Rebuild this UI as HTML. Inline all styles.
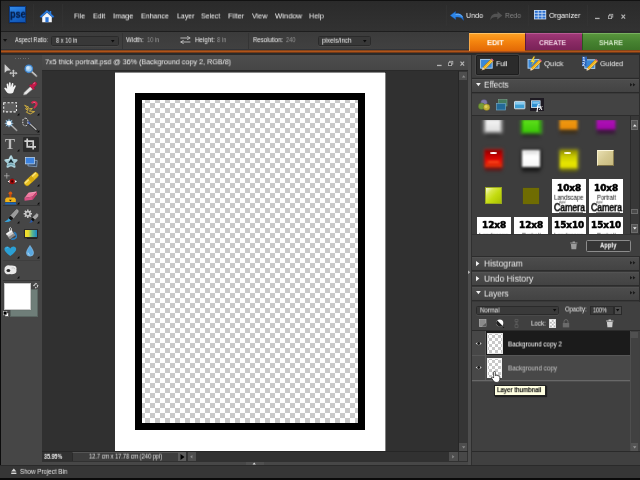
<!DOCTYPE html>
<html><head><meta charset="utf-8"><title>Photoshop Elements</title>
<style>
html,body{margin:0;padding:0;background:#000;}
body{width:640px;height:480px;overflow:hidden;position:relative;font-family:"Liberation Sans",sans-serif;}
#app{position:absolute;left:0;top:0;width:640px;height:480px;overflow:hidden;background:#444;}
#app div,#app svg,#app span{position:absolute;box-sizing:border-box;}
#app svg{overflow:visible;}
.t{white-space:nowrap;transform-origin:0 50%;will-change:transform;}


</style></head><body><div id="app">
<div style="left:0px;top:0px;width:640px;height:30.5px;background:linear-gradient(#2a2a2a,#323232);"></div>
<div style="left:0px;top:0px;width:640px;height:1.3px;background:#121212;"></div>
<div style="left:0px;top:30.5px;width:468.5px;height:19.5px;background:linear-gradient(#3b3b3b,#414141);border-top:1px solid #1e1e1e;"></div>
<div style="left:0px;top:49px;width:468.5px;height:1px;background:#30343a;"></div>
<div style="left:0px;top:49.9px;width:640px;height:3.4px;background:linear-gradient(#5a3018,#b85a1c 35%,#aa5018 60%,#4a2a18);"></div>
<div style="left:0px;top:53.3px;width:640px;height:1.3px;background:#2a2a2a;"></div>
<div style="left:0px;top:54.6px;width:41.5px;height:410.4px;background:#464646;"></div>
<div style="left:0px;top:0px;width:1.2px;height:480px;background:#0c0c0c;"></div>
<div style="left:41.5px;top:54.6px;width:426.5px;height:15.4px;background:linear-gradient(#4d4d4d,#464646);"></div>
<div style="left:41.5px;top:70px;width:426.5px;height:1px;background:#2a2a2a;"></div>
<div style="left:41.5px;top:71px;width:416.5px;height:380px;background:#303030;"></div>
<div style="left:115px;top:72px;width:270px;height:1px;background:#8a8a8a;"></div>
<div style="left:385px;top:73px;width:1px;height:378px;background:#808080;"></div>
<div style="left:115px;top:73px;width:270px;height:378px;background:#fff;"></div>
<div style="left:141px;top:99px;width:218px;height:325px;background-color:#fff;background-image:conic-gradient(#c9c9c9 25%,#fff 0 50%,#c9c9c9 0 75%,#fff 0);background-size:10px 10px;background-position:-1px -1px;filter:blur(.5px);"></div>
<div style="left:135px;top:93.1px;width:230px;height:6.9px;background:#000;"></div>
<div style="left:135px;top:423.2px;width:230px;height:6.9px;background:#000;"></div>
<div style="left:135px;top:93.1px;width:6.8px;height:337.0px;background:#000;"></div>
<div style="left:358.2px;top:93.1px;width:6.8px;height:337.0px;background:#000;"></div>
<div style="left:458px;top:71px;width:10px;height:380.3px;background:#353535;border-left:1px solid #262626;"></div>
<div style="left:459.3px;top:72.3px;width:7.9px;height:8.2px;background:#4e4e4e;"></div>
<svg style="left:461.6px;top:75.2px;" width="3.4" height="2.6" viewBox="0 0 3.4 2.6"><path d="M0 2.4 L1.7 0.2 L3.4 2.4Z" fill="#8a8a8a"/></svg>
<div style="left:459.3px;top:442.5px;width:7.9px;height:8.5px;background:#4e4e4e;"></div>
<svg style="left:461.6px;top:445.6px;" width="3.4" height="2.6" viewBox="0 0 3.4 2.6"><path d="M0 0.2 L1.7 2.4 L3.4 0.2Z" fill="#8a8a8a"/></svg>
<div style="left:41.5px;top:451px;width:426.5px;height:11px;background:#313131;border-top:1px solid #262626;"></div>
<div style="left:41.5px;top:462px;width:426.5px;height:3px;background:#474747;"></div>
<div style="left:72px;top:452px;width:106.2px;height:9.2px;background:#3d3d3d;border-top:1px solid #555;border-left:1px solid #2a2a2a;"></div>
<div style="left:178.2px;top:452px;width:8.0px;height:9.2px;background:#5c5c5c;"></div>
<svg style="left:180px;top:453.5px;" width="5" height="6.0" viewBox="0 0 5 6.0"><path d="M0.5 0 L4.5 3 L0.5 6Z" fill="#000"/></svg>
<div style="left:187.5px;top:452.3px;width:8.5px;height:8.7px;background:#4e4e4e;"></div>
<svg style="left:190.4px;top:455px;" width="2.6" height="3.4" viewBox="0 0 2.6 3.4"><path d="M2.4 0 L0.2 1.7 L2.4 3.4Z" fill="#8a8a8a"/></svg>
<div style="left:449px;top:452.3px;width:9px;height:8.7px;background:#4e4e4e;"></div>
<svg style="left:452.4px;top:455px;" width="2.6" height="3.4" viewBox="0 0 2.6 3.4"><path d="M0.2 0 L2.4 1.7 L0.2 3.4Z" fill="#8a8a8a"/></svg>
<div style="left:458.5px;top:452.3px;width:8.5px;height:8.7px;background:#484848;"></div>
<div style="left:468px;top:54.6px;width:3px;height:410.4px;background:#4d4d4d;"></div>
<div style="left:471px;top:54.6px;width:1px;height:410.4px;background:#2f2f2f;"></div>
<div style="left:472px;top:54.6px;width:168px;height:410.9px;background:#3d3d3d;"></div>
<div style="left:0px;top:465.3px;width:640px;height:12.7px;background:#363636;border-top:1px solid #2a2a2a;"></div>
<div style="left:0px;top:478px;width:640px;height:2px;background:#0a0a0a;"></div>
<div style="left:8.6px;top:6px;width:17.8px;height:17.2px;background:linear-gradient(160deg,#348ae6,#1a6cd2 50%,#0e52b0);border:1px solid #0c3a80;border-bottom-color:#082a66;box-shadow:0 0 1px #1a1a1a;"></div>
<span id="t0" class="t" style="left:9.6px;top:7px;font-size:10.8px;line-height:12.96px;color:#061c44;font-weight:bold;transform:translateY(0.74px) scaleX(0.849);-webkit-text-stroke:0.3px #061c44;">pse</span>
<div style="left:33px;top:4px;width:1px;height:23px;background:#1c1c1c;border-right:0.5px solid #363636;opacity:.5;"></div>
<div style="left:62px;top:4px;width:1px;height:23px;background:#1c1c1c;border-right:0.5px solid #363636;opacity:.5;"></div>
<svg style="left:38.5px;top:8.5px;" width="16.0" height="14.0" viewBox="0 0 16.0 14.0">
<path d="M8 1 L0.8 7.6 L2.2 8.8 L8 3.4 L13.8 8.8 L15.2 7.6 Z" fill="#2d7fe0" stroke="#164a9a" stroke-width="0.5"/>
<path d="M3.2 8 L8 3.8 L12.8 8 V13.2 H3.2Z" fill="#f4f6fa"/>
<rect x="6.4" y="8.2" width="3.2" height="5" fill="#2a74d8"/>
<rect x="10.6" y="2" width="1.6" height="3" fill="#2d7fe0"/>
</svg>
<span id="t1" class="t" style="left:73.6px;top:11px;font-size:7.8px;line-height:9.36px;color:#f6f6f6;font-weight:normal;transform:translateY(0.38px) scaleX(0.8825);">File</span>
<span id="t2" class="t" style="left:92.8px;top:11px;font-size:7.8px;line-height:9.36px;color:#f6f6f6;font-weight:normal;transform:translateY(0.38px) scaleX(0.9005);">Edit</span>
<span id="t3" class="t" style="left:112.5px;top:11px;font-size:7.8px;line-height:9.36px;color:#f6f6f6;font-weight:normal;transform:translateY(0.38px) scaleX(0.9413);">Image</span>
<span id="t4" class="t" style="left:141px;top:11px;font-size:7.8px;line-height:9.36px;color:#f6f6f6;font-weight:normal;transform:translateY(0.38px) scaleX(0.9031);">Enhance</span>
<span id="t5" class="t" style="left:176.6px;top:11px;font-size:7.8px;line-height:9.36px;color:#f6f6f6;font-weight:normal;transform:translateY(0.38px) scaleX(0.8916);">Layer</span>
<span id="t6" class="t" style="left:201.4px;top:11px;font-size:7.8px;line-height:9.36px;color:#f6f6f6;font-weight:normal;transform:translateY(0.38px) scaleX(0.8859);">Select</span>
<span id="t7" class="t" style="left:228.3px;top:11px;font-size:7.8px;line-height:9.36px;color:#f6f6f6;font-weight:normal;transform:translateY(0.38px) scaleX(0.9234);">Filter</span>
<span id="t8" class="t" style="left:251.9px;top:11px;font-size:7.8px;line-height:9.36px;color:#f6f6f6;font-weight:normal;transform:translateY(0.38px) scaleX(0.9126);">View</span>
<span id="t9" class="t" style="left:274.9px;top:11px;font-size:7.8px;line-height:9.36px;color:#f6f6f6;font-weight:normal;transform:translateY(0.38px) scaleX(0.9771);">Window</span>
<span id="t10" class="t" style="left:309.3px;top:11px;font-size:7.8px;line-height:9.36px;color:#f6f6f6;font-weight:normal;transform:translateY(0.38px) scaleX(0.9223);">Help</span>
<span id="t11" class="t" style="left:466.2px;top:10px;font-size:7.8px;line-height:9.36px;color:#f6f6f6;font-weight:normal;transform:translateY(0.88px) scaleX(0.9174);">Undo</span>
<span id="t12" class="t" style="left:505px;top:10px;font-size:7.8px;line-height:9.36px;color:#868686;font-weight:normal;transform:translateY(0.88px) scaleX(0.8583);">Redo</span>
<span id="t13" class="t" style="left:548.6px;top:10px;font-size:7.8px;line-height:9.36px;color:#f6f6f6;font-weight:normal;transform:translateY(0.88px) scaleX(0.9172);">Organizer</span>
<div style="left:446px;top:5px;width:1px;height:21px;background:#1c1c1c;border-right:0.5px solid #363636;opacity:.5;"></div>
<div style="left:527.5px;top:5px;width:1.0px;height:21px;background:#1c1c1c;border-right:0.5px solid #363636;opacity:.5;"></div>
<div style="left:586.5px;top:5px;width:1.0px;height:21px;background:#1c1c1c;border-right:0.5px solid #363636;opacity:.5;"></div>
<svg style="left:450.4px;top:11px;filter:blur(.2px);" width="14.0" height="9.6" viewBox="0 0 14.0 9.6"><path d="M0.2 4.4 L5.6 0.4 L5.4 2.6 C10.4 1.8 13.6 4.4 13.4 9.4 C12 6.6 9.6 5.8 5.6 6.2 L5.8 8.6 Z" fill="#2d86e8" stroke="#1758b0" stroke-width="0.4"/><path d="M5.6 3.4 C9.4 2.8 11.6 4 12.4 6" fill="none" stroke="#8ec4f8" stroke-width="0.7"/></svg>
<svg style="left:489.6px;top:11px;filter:blur(.2px);" width="12.6" height="9.6" viewBox="0 0 12.6 9.6"><path d="M12.4 4.4 L7.4 0.6 L7.6 2.8 C3.2 2 0.2 4.4 0.4 9.2 C1.6 6.6 3.8 5.8 7.4 6.2 L7.2 8.4 Z" fill="#525252"/></svg>
<svg style="left:533.7px;top:10.4px;" width="12.2" height="9.4" viewBox="0 0 12.2 9.4"><rect x="0" y="0" width="12.2" height="9.4" fill="#cfe0f4"/>
<g fill="#2a6fd0"><rect x="0.8" y="0.8" width="3" height="2" /><rect x="4.6" y="0.8" width="3" height="2"/><rect x="8.4" y="0.8" width="3" height="2"/>
<rect x="0.8" y="3.7" width="3" height="2" /><rect x="4.6" y="3.7" width="3" height="2"/><rect x="8.4" y="3.7" width="3" height="2"/>
<rect x="0.8" y="6.6" width="3" height="2" /><rect x="4.6" y="6.6" width="3" height="2"/><rect x="8.4" y="6.6" width="3" height="2"/></g></svg>
<svg style="left:595.2px;top:13.8px;" width="5.0" height="5.0" viewBox="0 0 5.0 5.0"><rect x="0" y="3.8" width="4.6" height="1.3" fill="#b0b0b0"/></svg>
<svg style="left:607.8px;top:13.8px;" width="5.0" height="5.0" viewBox="0 0 5.0 5.0"><rect x="1.6" y="0.3" width="3.2" height="2.8" fill="none" stroke="#b0b0b0" stroke-width="0.8"/><rect x="0.4" y="1.8" width="3.2" height="2.8" fill="#333" stroke="#b0b0b0" stroke-width="0.8"/></svg>
<svg style="left:620.6px;top:13.8px;" width="5.0" height="5.0" viewBox="0 0 5.0 5.0"><path d="M0.5 0.6 L4.1 4.6 M4.1 0.6 L0.5 4.6" stroke="#b0b0b0" stroke-width="1.2"/></svg>
<svg style="left:437.2px;top:60.599999999999994px;" width="5.0" height="5.0" viewBox="0 0 5.0 5.0"><rect x="0" y="3.8" width="4.6" height="1.3" fill="#b4b4b4"/></svg>
<svg style="left:448.3px;top:60.599999999999994px;" width="5.0" height="5.0" viewBox="0 0 5.0 5.0"><rect x="1.6" y="0.3" width="3.2" height="2.8" fill="none" stroke="#b4b4b4" stroke-width="0.8"/><rect x="0.4" y="1.8" width="3.2" height="2.8" fill="#333" stroke="#b4b4b4" stroke-width="0.8"/></svg>
<svg style="left:459.8px;top:60.599999999999994px;" width="5.0" height="5.0" viewBox="0 0 5.0 5.0"><path d="M0.5 0.6 L4.1 4.6 M4.1 0.6 L0.5 4.6" stroke="#b4b4b4" stroke-width="1.2"/></svg>
<svg style="left:3px;top:39.4px;" width="4.2" height="2.8" viewBox="0 0 4.2 2.8"><path d="M0 0 H4.2 L2.1 2.8Z" fill="#111"/></svg>
<span id="t14" class="t" style="left:15px;top:36px;font-size:7px;line-height:8.4px;color:#f0f0f0;font-weight:normal;transform:translateY(0.14px) scaleX(0.7925);">Aspect Ratio:</span>
<div style="left:50.6px;top:36.2px;width:68.0px;height:9.8px;background:#383838;border:1px solid #2a2a2a;border-radius:1.5px;box-shadow:0 0.5px 0 #505050;"></div>
<span id="t15" class="t" style="left:55.6px;top:36px;font-size:7px;line-height:8.4px;color:#f0f0f0;font-weight:normal;transform:translateY(0.74px) scaleX(0.8085);">8 x 10 in</span>
<svg style="left:110.6px;top:39.6px;" width="3.6" height="2.4" viewBox="0 0 3.6 2.4"><path d="M0 0 H3.6 L1.8 2.4Z" fill="#0c0c0c"/></svg>
<div style="left:121.8px;top:33px;width:1.0px;height:15.5px;background:#343434;"></div>
<span id="t16" class="t" style="left:126.3px;top:36px;font-size:7px;line-height:8.4px;color:#f0f0f0;font-weight:normal;transform:translateY(0.14px) scaleX(0.8819);">Width:</span>
<span id="t17" class="t" style="left:146.9px;top:36px;font-size:7px;line-height:8.4px;color:#989898;font-weight:normal;transform:translateY(0.14px) scaleX(0.7901);">10 in</span>
<svg style="left:180px;top:36.3px;" width="10.8" height="8.0" viewBox="0 0 10.8 8.0"><path d="M0.4 2 H8.6 M7.2 0.4 L10.2 2 L7.2 3.6" fill="none" stroke="#c4c4c4" stroke-width="0.9"/><path d="M10.4 6 H2.2 M3.6 4.4 L0.6 6 L3.6 7.6" fill="none" stroke="#c4c4c4" stroke-width="0.9"/></svg>
<span id="t18" class="t" style="left:194.8px;top:36px;font-size:7px;line-height:8.4px;color:#f0f0f0;font-weight:normal;transform:translateY(0.14px) scaleX(0.8879);">Height:</span>
<span id="t19" class="t" style="left:216.7px;top:36px;font-size:7px;line-height:8.4px;color:#989898;font-weight:normal;transform:translateY(0.14px) scaleX(0.8232);">8 in</span>
<div style="left:248.4px;top:33px;width:1.0px;height:15.5px;background:#343434;"></div>
<span id="t20" class="t" style="left:253px;top:36px;font-size:7px;line-height:8.4px;color:#f0f0f0;font-weight:normal;transform:translateY(0.14px) scaleX(0.8564);">Resolution:</span>
<span id="t21" class="t" style="left:285.6px;top:36px;font-size:7px;line-height:8.4px;color:#989898;font-weight:normal;transform:translateY(0.14px) scaleX(0.8043);">240</span>
<div style="left:318.3px;top:36.2px;width:52.7px;height:9.8px;background:#383838;border:1px solid #2a2a2a;border-radius:1.5px;box-shadow:0 0.5px 0 #505050;"></div>
<span id="t22" class="t" style="left:322px;top:36px;font-size:7px;line-height:8.4px;color:#f0f0f0;font-weight:normal;transform:translateY(0.74px) scaleX(0.9025);">pixels/inch</span>
<svg style="left:363px;top:39.8px;" width="3.6" height="2.4" viewBox="0 0 3.6 2.4"><path d="M0 0 H3.6 L1.8 2.4Z" fill="#0c0c0c"/></svg>
<div style="left:468.5px;top:33px;width:56.8px;height:18px;background:linear-gradient(#fca024,#f4840e 45%,#e26806);border-left:0.6px solid #f8a848;border-top:1px solid #ffc266;"></div>
<div style="left:525.3px;top:33px;width:57.0px;height:17px;background:linear-gradient(#a03878,#8a2a64 50%,#7a2258);border-left:1px solid #5a1840;border-top:1px solid #b85a94;"></div>
<div style="left:582.3px;top:33px;width:57.7px;height:17px;background:linear-gradient(#58963c,#468230 50%,#3c7428);border-left:1px solid #2a5a1c;border-top:1px solid #78b060;"></div>
<div style="left:468.5px;top:30.5px;width:171.5px;height:2.5px;background:#2c2c2c;"></div>
<span id="t23" class="t" style="left:487.3px;top:38px;font-size:7.8px;line-height:9.36px;color:#fff;font-weight:bold;transform:translateY(0.18px) scaleX(0.9456);">EDIT</span>
<span id="t24" class="t" style="left:539.3px;top:38px;font-size:7.8px;line-height:9.36px;color:#efd0e2;font-weight:bold;transform:translateY(0.18px) scaleX(0.8576);">CREATE</span>
<span id="t25" class="t" style="left:598.6px;top:38px;font-size:7.8px;line-height:9.36px;color:#d0e6c4;font-weight:bold;transform:translateY(0.18px) scaleX(0.8756);">SHARE</span>
<span id="t26" class="t" style="left:45px;top:57px;font-size:7.8px;line-height:9.36px;color:#efefef;font-weight:normal;transform:translateY(0.28px) scaleX(0.9224);">7x5 thick portrait.psd @ 36% (Background copy 2, RGB/8)</span>
<span id="t27" class="t" style="left:44px;top:452px;font-size:6.6px;line-height:7.92px;color:#f0f0f0;font-weight:bold;transform:translateY(0.77px) scaleX(0.8179);">35.95%</span>
<span id="t28" class="t" style="left:88.5px;top:452px;font-size:6.6px;line-height:7.92px;color:#e2e2e2;font-weight:normal;transform:translateY(0.57px) scaleX(0.8559);">12.7 cm x 17.78 cm (240 ppi)</span>
<svg style="left:11px;top:468px;" width="5.6" height="7" viewBox="0 0 5.6 7"><path d="M2.8 0.4 L5.4 3.6 H0.2Z" fill="#d8d8d8"/><rect x="0.2" y="4.6" width="5.2" height="1.4" fill="#d8d8d8"/></svg>
<span id="t29" class="t" style="left:19.5px;top:467px;font-size:6.8px;line-height:8.16px;color:#e8e8e8;font-weight:normal;transform:translateY(0.86px) scaleX(0.9118);">Show Project Bin</span>
<div style="left:246px;top:462px;width:18px;height:3px;background:#505050;"></div>
<svg style="left:251.6px;top:462.2px;" width="4.4" height="2.8" viewBox="0 0 4.4 2.8"><path d="M0.6 2.6 L2.2 0.6 L3.8 2.6Z" fill="#dcdcdc"/></svg>
<div style="left:472px;top:54.6px;width:168px;height:22.9px;background:#3e3e3e;"></div>
<div style="left:476.3px;top:55px;width:42.7px;height:19.8px;background:#2b2b2b;border:1px solid #1e1e1e;border-radius:1px;box-shadow:0 0 0 0.5px #555;"></div>
<svg style="left:479.6px;top:56.8px;filter:blur(.2px);" width="14.0" height="14.0" viewBox="0 0 14.0 14.0"><rect x="0.6" y="2.4" width="11.6" height="8.8" fill="#3a88d8" stroke="#b4d6f4" stroke-width="0.9"/><path d="M10.8 2.2 L13 4.2 L5 12.2 L2.8 10.2Z" fill="#f2b41c" stroke="#8a5a10" stroke-width="0.4"/><path d="M11.4 2.8 L12.4 3.7 L4.6 11.6" fill="none" stroke="#fbe07a" stroke-width="0.6"/><path d="M2.8 10.2 L5 12.2 L1.6 13.4Z" fill="#f0d8b0"/><path d="M1.6 13.4 L2.6 13 L2 12.2Z" fill="#333"/><path d="M10.8 2.2 L13 4.2 L13.8 3.4 L11.8 1.4Z" fill="#e0607e"/></svg>
<svg style="left:527.2px;top:56.8px;filter:blur(.2px);" width="14.0" height="14.0" viewBox="0 0 14.0 14.0"><rect x="1" y="2.4" width="11" height="8.8" fill="#3a88d8" stroke="#b4d6f4" stroke-width="0.9"/><path d="M6.6 -0.6 L3.4 5 H5.8 L4.4 8.6 L8.6 3.2 H6.2 L8 -0.6Z" fill="#ffe23a" stroke="#a07a10" stroke-width="0.3"/><g transform="translate(1.2,0.6)"><path d="M10.8 2.2 L13 4.2 L5 12.2 L2.8 10.2Z" fill="#f2b41c" stroke="#8a5a10" stroke-width="0.4"/><path d="M11.4 2.8 L12.4 3.7 L4.6 11.6" fill="none" stroke="#fbe07a" stroke-width="0.6"/><path d="M2.8 10.2 L5 12.2 L1.6 13.4Z" fill="#f0d8b0"/><path d="M1.6 13.4 L2.6 13 L2 12.2Z" fill="#333"/><path d="M10.8 2.2 L13 4.2 L13.8 3.4 L11.8 1.4Z" fill="#e0607e"/></g></svg>
<svg style="left:581.6px;top:56.6px;filter:blur(.2px);" width="14.0" height="14.0" viewBox="0 0 14.0 14.0"><rect x="2.8" y="2.8" width="10" height="8.6" fill="#3a88d8" stroke="#b4d6f4" stroke-width="0.9"/><rect x="0" y="-0.4" width="5" height="4.6" fill="#2a62b8"/><text x="0.4" y="3.6" font-size="4.8" font-weight="bold" fill="#e8f0ff" font-family="Liberation Sans">1</text><rect x="0" y="4.6" width="4.4" height="4.6" fill="#2a62b8"/><text x="0.3" y="8.6" font-size="4.8" font-weight="bold" fill="#e8f0ff" font-family="Liberation Sans">2</text><g transform="translate(2.4,0.6)"><path d="M10.8 2.2 L13 4.2 L5 12.2 L2.8 10.2Z" fill="#f2b41c" stroke="#8a5a10" stroke-width="0.4"/><path d="M11.4 2.8 L12.4 3.7 L4.6 11.6" fill="none" stroke="#fbe07a" stroke-width="0.6"/><path d="M2.8 10.2 L5 12.2 L1.6 13.4Z" fill="#f0d8b0"/><path d="M1.6 13.4 L2.6 13 L2 12.2Z" fill="#333"/><path d="M10.8 2.2 L13 4.2 L13.8 3.4 L11.8 1.4Z" fill="#e0607e"/></g></svg>
<span id="t30" class="t" style="left:495.7px;top:59px;font-size:7.8px;line-height:9.36px;color:#ffffff;font-weight:normal;transform:translateY(0.18px) scaleX(0.9143);">Full</span>
<span id="t31" class="t" style="left:543.8px;top:59px;font-size:7.8px;line-height:9.36px;color:#f0f0f0;font-weight:normal;transform:translateY(0.18px) scaleX(0.973);">Quick</span>
<span id="t32" class="t" style="left:599.8px;top:59px;font-size:7.8px;line-height:9.36px;color:#f0f0f0;font-weight:normal;transform:translateY(0.18px) scaleX(0.9222);">Guided</span>
<div style="left:472px;top:77px;width:168px;height:1px;background:#3a3a3a;"></div>
<div style="left:472px;top:78px;width:168px;height:1px;background:#2a2a2a;"></div>
<div style="left:472px;top:79px;width:168px;height:13px;background:linear-gradient(#585858,#4c4c4c 8%,#434343);"></div>
<svg style="left:476px;top:83.4px;" width="5" height="3.4" viewBox="0 0 5 3.4"><path d="M0 0 H4.8 L2.4 3.2Z" fill="#f0f0f0"/></svg>
<span id="t33" class="t" style="left:483.8px;top:78px;font-size:9.6px;line-height:11.52px;color:#ececec;font-weight:normal;transform:translateY(0.63px) scaleX(0.8437);">Effects</span>
<svg style="left:629.8px;top:82.9px;" width="5.6" height="3.6" viewBox="0 0 5.6 3.6"><path d="M0 0 L2.4 1.8 L0 3.6Z M3 0 L5.4 1.8 L3 3.6Z" fill="#1a1a1a"/></svg>
<div style="left:472px;top:92px;width:168px;height:1px;background:#2a2a2a;"></div>
<div style="left:472px;top:93px;width:168px;height:1px;background:#3a3a3a;"></div>
<div style="left:472px;top:255px;width:168px;height:1px;background:#323232;"></div>
<div style="left:472px;top:256px;width:168px;height:1px;background:#2c2c2c;"></div>
<div style="left:472px;top:257px;width:168px;height:13px;background:linear-gradient(#585858,#4c4c4c 8%,#434343);"></div>
<svg style="left:476.2px;top:260.9px;" width="3.8" height="5.2" viewBox="0 0 3.8 5.2"><path d="M0 0 L3.4 2.6 L0 5.2Z" fill="#f0f0f0"/></svg>
<span id="t34" class="t" style="left:483.8px;top:257px;font-size:9.6px;line-height:11.52px;color:#ececec;font-weight:normal;transform:translateY(0.53px) scaleX(0.8875);">Histogram</span>
<svg style="left:629.8px;top:260.9px;" width="5.6" height="3.6" viewBox="0 0 5.6 3.6"><path d="M0 0 L2.4 1.8 L0 3.6Z M3 0 L5.4 1.8 L3 3.6Z" fill="#1a1a1a"/></svg>
<div style="left:472px;top:270px;width:168px;height:1px;background:#2c2c2c;"></div>
<div style="left:472px;top:271px;width:168px;height:1px;background:#363636;"></div>
<div style="left:472px;top:272px;width:168px;height:13px;background:linear-gradient(#585858,#4c4c4c 8%,#434343);"></div>
<svg style="left:476.2px;top:275.9px;" width="3.8" height="5.2" viewBox="0 0 3.8 5.2"><path d="M0 0 L3.4 2.6 L0 5.2Z" fill="#f0f0f0"/></svg>
<span id="t35" class="t" style="left:483.8px;top:272px;font-size:9.6px;line-height:11.52px;color:#ececec;font-weight:normal;transform:translateY(0.63px) scaleX(0.8872);">Undo History</span>
<svg style="left:629.8px;top:275.9px;" width="5.6" height="3.6" viewBox="0 0 5.6 3.6"><path d="M0 0 L2.4 1.8 L0 3.6Z M3 0 L5.4 1.8 L3 3.6Z" fill="#1a1a1a"/></svg>
<div style="left:472px;top:285px;width:168px;height:1px;background:#2c2c2c;"></div>
<div style="left:472px;top:286px;width:168px;height:1px;background:#363636;"></div>
<div style="left:472px;top:287px;width:168px;height:13px;background:linear-gradient(#585858,#4c4c4c 8%,#434343);"></div>
<svg style="left:476px;top:291.4px;" width="5" height="3.4" viewBox="0 0 5 3.4"><path d="M0 0 H4.8 L2.4 3.2Z" fill="#f0f0f0"/></svg>
<span id="t36" class="t" style="left:483.8px;top:287px;font-size:9.6px;line-height:11.52px;color:#ececec;font-weight:normal;transform:translateY(0.53px) scaleX(0.8508);">Layers</span>
<svg style="left:629.8px;top:290.9px;" width="5.6" height="3.6" viewBox="0 0 5.6 3.6"><path d="M0 0 L2.4 1.8 L0 3.6Z M3 0 L5.4 1.8 L3 3.6Z" fill="#1a1a1a"/></svg>
<div style="left:472px;top:300px;width:168px;height:1px;background:#2c2c2c;"></div>
<div style="left:472px;top:301px;width:168px;height:1px;background:#383838;"></div>
<div style="left:472px;top:94px;width:168px;height:21px;background:#434343;"></div>
<div style="left:472px;top:115px;width:168px;height:1px;background:#2c2c2c;"></div>
<div style="left:472px;top:116px;width:168px;height:1px;background:#353535;"></div>
<div style="left:472px;top:116.4px;width:158.4px;height:118.0px;background:#3d3d3d;overflow:hidden;"></div>
<div style="left:630.4px;top:116.4px;width:8.2px;height:118.0px;background:#383838;border-left:1px solid #2a2a2a;"></div>
<div style="left:631px;top:120px;width:7.4px;height:10px;background:#565656;border:1px solid #6c6c6c;"></div>
<svg style="left:633px;top:123.6px;" width="3.6" height="3.0" viewBox="0 0 3.6 3.0"><path d="M0 2.6 L1.8 0.2 L3.6 2.6Z" fill="#eee"/></svg>
<div style="left:631px;top:208.6px;width:7.4px;height:5.0px;background:#4a4a4a;border:1px solid #6a6a6a;"></div>
<div style="left:631px;top:224px;width:7.4px;height:9.2px;background:#565656;border:1px solid #6c6c6c;"></div>
<svg style="left:633px;top:227.4px;" width="3.6" height="3.0" viewBox="0 0 3.6 3.0"><path d="M0 0.2 L1.8 2.6 L3.6 0.2Z" fill="#eee"/></svg>
<div style="left:638.6px;top:54.6px;width:1.4px;height:410.4px;background:#2c2c2c;"></div>
<div style="left:472px;top:234.4px;width:168px;height:21.6px;background:#3f3f3f;border-top:1px solid #333;"></div>
<div style="left:586px;top:240px;width:45px;height:12px;background:#363636;border:1px solid #8c8c8c;border-radius:1.5px;"></div>
<span id="t37" class="t" style="left:600.4px;top:241px;font-size:7.4px;line-height:8.88px;color:#fff;font-weight:bold;transform:translateY(0.51px) scaleX(0.7988);">Apply</span>
<svg style="left:569.8px;top:241.4px;" width="8.0" height="8.4" viewBox="0 0 8.0 8.4"><path d="M0.2 1.6 H7.4 V2.6 H0.2Z M2.6 0.4 H5 V1.6 H2.6Z" fill="#9c9c9c"/><path d="M0.9 3 H6.7 L6.2 8.2 H1.4Z" fill="#9c9c9c"/></svg>
<div style="left:472px;top:302px;width:168px;height:149px;background:#404040;"></div>
<div style="left:476px;top:305.8px;width:83.4px;height:8.8px;background:#3a3a3a;border:1px solid #2a2a2a;border-radius:1.5px;box-shadow:0 0.5px 0 #555;"></div>
<span id="t38" class="t" style="left:479.6px;top:306px;font-size:6.8px;line-height:8.16px;color:#ececec;font-weight:normal;transform:translateY(0.46px) scaleX(0.8856);">Normal</span>
<svg style="left:553.4px;top:309.2px;" width="3.6" height="2.4" viewBox="0 0 3.6 2.4"><path d="M0 0 H3.4 L1.7 2.4Z" fill="#0c0c0c"/></svg>
<span id="t39" class="t" style="left:564.8px;top:305px;font-size:6.8px;line-height:8.16px;color:#ececec;font-weight:normal;transform:translateY(0.46px) scaleX(0.8622);">Opacity:</span>
<div style="left:590.3px;top:305.8px;width:23.3px;height:8.8px;background:#383838;border:1px solid #2a2a2a;"></div>
<span id="t40" class="t" style="left:592.6px;top:306px;font-size:6.8px;line-height:8.16px;color:#ececec;font-weight:normal;transform:translateY(0.46px) scaleX(0.7935);">100%</span>
<div style="left:614px;top:305.8px;width:8px;height:8.8px;background:#4c4c4c;border:1px solid #2a2a2a;"></div>
<svg style="left:616.4px;top:309.2px;" width="3.4" height="2.4" viewBox="0 0 3.4 2.4"><path d="M0 0 H3.4 L1.7 2.4Z" fill="#0c0c0c"/></svg>
<svg style="left:478.6px;top:319px;" width="7.6" height="8.6" viewBox="0 0 7.6 8.6"><rect x="0.4" y="0.6" width="6.6" height="7" fill="#8a8a8a" stroke="#b8b8b8" stroke-width="0.6"/><path d="M3 7.6 H7 V4Z" fill="#5a5a5a"/></svg>
<svg style="left:496px;top:319px;" width="8" height="9" viewBox="0 0 8 9"><circle cx="3.8" cy="4" r="3.5" fill="#fff"/><path d="M1.3 1.5 A3.5 3.5 0 0 0 6.3 6.5Z" fill="#222"/><path d="M6.6 8 H8.4 L7.5 9Z" fill="#111"/></svg>
<svg style="left:513.6px;top:318.8px;" width="5.0" height="9.2" viewBox="0 0 5.0 9.2"><path d="M1 0.4 H4 V2.6 H1Z M2 2.6 H3 V5.6 H2Z M1 5.6 H4 V8.6 H1Z" fill="none" stroke="#5e5e5e" stroke-width="0.8"/></svg>
<span id="t41" class="t" style="left:531.2px;top:319px;font-size:6.8px;line-height:8.16px;color:#ececec;font-weight:normal;transform:translateY(0.66px) scaleX(0.9108);">Lock:</span>
<div style="left:548.6px;top:319.2px;width:7.8px;height:8.4px;background-color:#fff;background-image:conic-gradient(#bbb 25%,#fff 0 50%,#bbb 0 75%,#fff 0);background-size:3.6px 3.6px;border:0.6px solid #ddd;"></div>
<svg style="left:562.4px;top:318.8px;" width="8.0" height="9.2" viewBox="0 0 8.0 9.2"><path d="M2 4 V2.6 A2 2 0 0 1 6 2.6 V4" fill="none" stroke="#6a6a6a" stroke-width="1"/><rect x="0.8" y="4" width="6.4" height="4.4" fill="#6a6a6a"/></svg>
<svg style="left:606.2px;top:319.2px;" width="8.0" height="8.4" viewBox="0 0 8.0 8.4"><path d="M0.2 1.6 H7.4 V2.6 H0.2Z M2.6 0.4 H5 V1.6 H2.6Z" fill="#cfcfcf"/><path d="M0.9 3 H6.7 L6.2 8.2 H1.4Z" fill="#cfcfcf"/></svg>
<div style="left:472px;top:330px;width:168px;height:1.3px;background:#2c2c2c;"></div>
<div style="left:472px;top:331.3px;width:13.4px;height:23.5px;background:#474747;"></div>
<div style="left:485.4px;top:331.3px;width:144.8px;height:23.5px;background:#1b1b1b;"></div>
<div style="left:472px;top:354.8px;width:158.2px;height:1.2px;background:#565656;"></div>
<div style="left:472px;top:356.2px;width:158.2px;height:24.2px;background:#484848;"></div>
<div style="left:485px;top:331.3px;width:0.8px;height:49.1px;background:#5a5a5a;"></div>
<div style="left:472px;top:380px;width:158.2px;height:1px;background:#686868;"></div>
<div style="left:472px;top:381px;width:158.2px;height:1px;background:#4c4c4c;"></div>
<svg style="left:474.6px;top:341.0px;" width="7.4" height="5.2" viewBox="0 0 7.4 5.2"><path d="M0.3 2.6 Q3.7 -1.2 7.1 2.6 Q3.7 6.2 0.3 2.6Z" fill="#dcdcdc" stroke="#2a2a2a" stroke-width="0.5"/><circle cx="3.7" cy="2.5" r="1.5" fill="#161616"/></svg>
<svg style="left:474.6px;top:365.29999999999995px;" width="7.4" height="5.2" viewBox="0 0 7.4 5.2"><path d="M0.3 2.6 Q3.7 -1.2 7.1 2.6 Q3.7 6.2 0.3 2.6Z" fill="#dcdcdc" stroke="#2a2a2a" stroke-width="0.5"/><circle cx="3.7" cy="2.5" r="1.5" fill="#161616"/></svg>
<div style="left:487px;top:333px;width:16px;height:21px;background:#e4e4e4;"></div>
<div style="left:488px;top:334px;width:14px;height:19px;background-color:#fff;background-image:conic-gradient(#c8c8c8 25%,#fff 0 50%,#c8c8c8 0 75%,#fff 0);background-size:6px 6px;background-position:1px 1px;filter:blur(.3px);"></div>
<div style="left:487px;top:358px;width:15px;height:20px;background:#f4f4f4;"></div>
<div style="left:488px;top:359px;width:13px;height:18px;background-color:#fff;background-image:conic-gradient(#c8c8c8 25%,#fff 0 50%,#c8c8c8 0 75%,#fff 0);background-size:6px 6px;background-position:1px 1px;filter:blur(.3px);"></div>
<span id="t42" class="t" style="left:507.5px;top:340px;font-size:7px;line-height:8.4px;color:#ffffff;font-weight:normal;transform:translateY(0.44px) scaleX(0.9009);">Background copy 2</span>
<span id="t43" class="t" style="left:507.5px;top:364px;font-size:7px;line-height:8.4px;color:#c8c8c8;font-weight:normal;transform:translateY(0.44px) scaleX(0.9095);">Background copy</span>
<div style="left:630.2px;top:331.3px;width:8.4px;height:119.7px;background:#414141;border-left:0.8px solid #4e4e4e;"></div>
<div style="left:631px;top:332.4px;width:7.2px;height:6.0px;background:#505050;"></div>
<div style="left:631px;top:443.4px;width:7.2px;height:7.2px;background:#545454;"></div>
<svg style="left:633px;top:445.8px;" width="3.4" height="2.6" viewBox="0 0 3.4 2.6"><path d="M0 0.2 L1.7 2.4 L3.4 0.2Z" fill="#999"/></svg>
<div style="left:472px;top:451px;width:168px;height:1px;background:#2a2a2a;"></div>
<div style="left:472px;top:452px;width:168px;height:13.3px;background:#404040;"></div>
<div style="left:493.5px;top:384.8px;width:52.1px;height:10.8px;background:#ffffe1;border:0.8px solid #222;box-shadow:1px 1px 1px rgba(0,0,0,.5);"></div>
<span id="t44" class="t" style="left:497px;top:386px;font-size:6.8px;line-height:8.16px;color:#000;font-weight:normal;transform:translateY(0.16px) scaleX(0.9178);-webkit-text-stroke:0.2px #000;">Layer thumbnail</span>
<svg style="left:491px;top:371px;" width="9" height="12" viewBox="0 0 9 12"><path d="M2.6 5.6 V1.4 Q2.6 0.4 3.5 0.4 Q4.4 0.4 4.4 1.4 V4.6 Q4.4 3.8 5.2 3.8 Q6 3.8 6 4.8 Q6 4.2 6.8 4.2 Q7.5 4.2 7.5 5.2 Q7.6 4.8 8.2 4.8 Q8.8 4.8 8.8 5.8 V8.4 Q8.8 11.4 6.2 11.4 H5 Q3.4 11.4 2.4 9.8 L0.6 7.2 Q0.2 6.4 0.9 6 Q1.6 5.6 2.6 7Z" fill="#fff" stroke="#111" stroke-width="0.7"/></svg>
<div style="left:485.6px;top:120px;width:14.8px;height:10.6px;background:linear-gradient(#f4f4f4,#e0e0e0);box-shadow:0 0 3px 2px rgba(255,255,255,.75),0 5px 3px rgba(0,0,0,.45);filter:blur(.85px);"></div>
<div style="left:522.4px;top:120px;width:17.2px;height:11.8px;background:linear-gradient(#5ee01a,#3cc808);box-shadow:0 0 2.5px 1.5px rgba(70,220,20,.7),0 5px 3px rgba(0,0,0,.4);border-left:1.4px solid #2a9a06;border-right:1.4px solid #2a9a06;filter:blur(.85px);"></div>
<div style="left:559.8px;top:120px;width:17.0px;height:8.8px;background:linear-gradient(#f09a10,#e88a08);box-shadow:0 0 2px 1px rgba(240,150,20,.55),0 4.5px 2.5px rgba(60,40,10,.6);filter:blur(.85px);"></div>
<div style="left:597.2px;top:120px;width:17.8px;height:9.4px;background:linear-gradient(#b010b8,#a008a8);box-shadow:0 0 2px 1px rgba(170,20,180,.5),0 4.5px 2.5px rgba(60,10,60,.7);filter:blur(.85px);"></div>
<div style="left:472px;top:116px;width:158.4px;height:4px;background:#3c3c3c;"></div>
<div style="left:472px;top:115px;width:158.4px;height:1px;background:#2c2c2c;"></div>
<div style="left:485.2px;top:150px;width:16.8px;height:17.2px;background:linear-gradient(#8a0000,#c80000 35%,#e81408 70%,#d83808);box-shadow:0 0 2.5px 1px rgba(230,20,10,.6),0 4px 2.5px rgba(110,0,0,.6);filter:blur(.85px);"></div>
<div style="left:489.6px;top:152.2px;width:7.4px;height:2.2px;background:#fff;border-radius:50%;filter:blur(.3px);"></div>
<div style="left:488.2px;top:161.4px;width:10.8px;height:1.2px;background:#ff5a20;opacity:.8;filter:blur(.85px);"></div>
<div style="left:522px;top:149.6px;width:17.6px;height:17.6px;background:linear-gradient(#e4e4e4,#fff 40%,#f4f4f4);box-shadow:0 0 3px 1.5px rgba(0,0,0,.55),0 5px 3px rgba(0,0,0,.5);filter:blur(.85px);"></div>
<div style="left:525px;top:152px;width:11.6px;height:1.2px;background:#d8d8d8;filter:blur(.85px);"></div>
<div style="left:559.8px;top:149.6px;width:17.2px;height:18.0px;background:linear-gradient(#8a8600,#c8c800 35%,#e8e800 75%,#d8d400);box-shadow:0 0 3px 1.5px rgba(230,230,20,.6),0 4px 2.5px rgba(90,90,0,.6);filter:blur(.85px);"></div>
<div style="left:563.6px;top:152.4px;width:7.4px;height:2.0px;background:#fffbe0;border-radius:50%;filter:blur(.3px);"></div>
<div style="left:597.2px;top:149.8px;width:17.0px;height:16.6px;background:linear-gradient(135deg,#e8deb0,#d4c890 50%,#c8ba80);border-top:1.2px solid #fbf6dc;border-left:1.2px solid #f4ecc8;border-right:1.2px solid #8a7e50;border-bottom:1.2px solid #7a6e44;filter:blur(.45px);"></div>
<div style="left:484.8px;top:187.2px;width:17.0px;height:17.2px;background:linear-gradient(135deg,#f8fbe0 0%,#d8e848 28%,#c4dc10 55%,#a8c000);border:0.6px solid #9aa820;filter:blur(.45px);"></div>
<div style="left:522.5px;top:187.8px;width:16.7px;height:16.6px;background:#6f6c02;box-shadow:0 0 1px #5a5800;filter:blur(.45px);"></div>
<div style="left:552px;top:179.2px;width:33.7px;height:34.0px;background:#fff;overflow:hidden;"></div>
<span id="t45" class="t" style="left:556.75px;top:182px;font-size:8.4px;line-height:10.08px;color:#000;font-weight:bold;font-family:'DejaVu Sans','Liberation Sans',sans-serif;transform:translateY(0.63px) scaleX(1.0572);-webkit-text-stroke:0.55px #000;">10x8</span>
<span id="t46" class="t" style="left:554.3000000000001px;top:193px;font-size:6.6px;line-height:7.92px;color:#111;font-weight:normal;transform:translateY(0.77px) scaleX(0.9143);">Landscape</span>
<span id="t47" class="t" style="left:558.5px;top:201px;font-size:2.6px;line-height:3.12px;color:#333;font-weight:normal;transform:translateY(0.29px) scaleX(0.9585);">digital</span>
<span id="t48" class="t" style="left:553.5px;top:201px;font-size:10.8px;line-height:12.96px;color:#000;font-weight:normal;transform:translateY(0.14px) scaleX(0.8046);-webkit-text-stroke:0.6px #000;">Camera</span>
<div style="left:559px;top:211.79999999999998px;width:24px;height:0.6px;background:#888;"></div>
<div style="left:589.4px;top:179.2px;width:33.7px;height:34.0px;background:#fff;overflow:hidden;"></div>
<span id="t49" class="t" style="left:594.15px;top:182px;font-size:8.4px;line-height:10.08px;color:#000;font-weight:bold;font-family:'DejaVu Sans','Liberation Sans',sans-serif;transform:translateY(0.63px) scaleX(1.0572);-webkit-text-stroke:0.55px #000;">10x8</span>
<span id="t50" class="t" style="left:597.0500000000001px;top:193px;font-size:6.6px;line-height:7.92px;color:#111;font-weight:normal;transform:translateY(0.77px) scaleX(0.8841);">Portrait</span>
<span id="t51" class="t" style="left:595.9px;top:201px;font-size:2.6px;line-height:3.12px;color:#333;font-weight:normal;transform:translateY(0.29px) scaleX(0.9585);">digital</span>
<span id="t52" class="t" style="left:590.9px;top:201px;font-size:10.8px;line-height:12.96px;color:#000;font-weight:normal;transform:translateY(0.14px) scaleX(0.8046);-webkit-text-stroke:0.6px #000;">Camera</span>
<div style="left:596.4px;top:211.79999999999998px;width:24.0px;height:0.6px;background:#888;"></div>
<div style="left:477px;top:217px;width:33.7px;height:17.2px;background:#fff;overflow:hidden;"></div>
<span id="t53" class="t" style="left:481.75px;top:220px;font-size:8.4px;line-height:10.08px;color:#000;font-weight:bold;font-family:'DejaVu Sans','Liberation Sans',sans-serif;transform:translateY(0.23px) scaleX(1.0572);-webkit-text-stroke:0.55px #000;">12x8</span>
<span id="t54" class="t" style="left:479.3px;top:231px;font-size:6.6px;line-height:7.92px;color:#333;font-weight:normal;transform:translateY(0.77px) scaleX(0.9143);clip-path:inset(0 0 62% 0);">Landscape</span>
<div style="left:514.4px;top:217px;width:33.7px;height:17.2px;background:#fff;overflow:hidden;"></div>
<span id="t55" class="t" style="left:519.15px;top:220px;font-size:8.4px;line-height:10.08px;color:#000;font-weight:bold;font-family:'DejaVu Sans','Liberation Sans',sans-serif;transform:translateY(0.23px) scaleX(1.0572);-webkit-text-stroke:0.55px #000;">12x8</span>
<span id="t56" class="t" style="left:522.0500000000001px;top:231px;font-size:6.6px;line-height:7.92px;color:#333;font-weight:normal;transform:translateY(0.77px) scaleX(0.8841);clip-path:inset(0 0 62% 0);">Portrait</span>
<div style="left:552px;top:217px;width:33.7px;height:17.2px;background:#fff;overflow:hidden;"></div>
<span id="t57" class="t" style="left:553.75px;top:220px;font-size:8.4px;line-height:10.08px;color:#000;font-weight:bold;font-family:'DejaVu Sans','Liberation Sans',sans-serif;transform:translateY(0.23px) scaleX(1.0516);-webkit-text-stroke:0.55px #000;">15x10</span>
<span id="t58" class="t" style="left:554.3000000000001px;top:231px;font-size:6.6px;line-height:7.92px;color:#333;font-weight:normal;transform:translateY(0.77px) scaleX(0.9143);clip-path:inset(0 0 62% 0);">Landscape</span>
<div style="left:589.4px;top:217px;width:33.7px;height:17.2px;background:#fff;overflow:hidden;"></div>
<span id="t59" class="t" style="left:591.15px;top:220px;font-size:8.4px;line-height:10.08px;color:#000;font-weight:bold;font-family:'DejaVu Sans','Liberation Sans',sans-serif;transform:translateY(0.23px) scaleX(1.0516);-webkit-text-stroke:0.55px #000;">15x10</span>
<span id="t60" class="t" style="left:597.0500000000001px;top:231px;font-size:6.6px;line-height:7.92px;color:#333;font-weight:normal;transform:translateY(0.77px) scaleX(0.8841);clip-path:inset(0 0 62% 0);">Portrait</span>
<svg style="left:478.4px;top:98.8px;" width="12.4" height="12.2" viewBox="0 0 12.4 12.2"><circle cx="6" cy="3.8" r="3.3" fill="#7f78a8" stroke="#4a4660" stroke-width="0.4"/><circle cx="3.6" cy="7.2" r="3.3" fill="#74993a" stroke="#465a20" stroke-width="0.4"/><circle cx="8.6" cy="8.2" r="3.3" fill="#c4b236" stroke="#6a601c" stroke-width="0.4"/><circle cx="8" cy="7.4" r="1.5" fill="#dccf5c"/></svg>
<svg style="left:496px;top:99.2px;" width="11.6" height="11.6" viewBox="0 0 11.6 11.6"><rect x="2.6" y="0.6" width="8.4" height="6.4" fill="#447a5e" stroke="#7aa48c" stroke-width="0.6"/><rect x="0.6" y="4.4" width="9" height="6.6" fill="#236a98" stroke="#6ea4c2" stroke-width="0.7"/></svg>
<svg style="left:514.4px;top:99.8px;" width="11.0" height="9.2" viewBox="0 0 11.0 9.2"><rect x="0.5" y="1.4" width="10.4" height="7.4" rx="0.6" fill="#3f9fd4" stroke="#dfeaf2" stroke-width="0.9"/><rect x="1.2" y="2" width="9" height="2.6" fill="#8ccdf0"/></svg>
<div style="left:530.2px;top:97.8px;width:13.6px;height:13.2px;background:#1e1a22;"></div>
<svg style="left:531.4px;top:100px;" width="12.4" height="11.2" viewBox="0 0 12.4 11.2"><rect x="0.5" y="0.8" width="8.6" height="6.8" fill="#2f8fd0" stroke="#dfeaf2" stroke-width="0.8"/><rect x="1.4" y="1.6" width="6.8" height="2.2" fill="#7ec4ee"/><text x="5.6" y="10.4" font-size="7.4" font-style="italic" font-weight="bold" font-family="Liberation Serif" fill="#fff">fx</text></svg>
<div style="left:15.0px;top:57.6px;width:1.0px;height:1.0px;background:#6e6e6e;"></div>
<div style="left:17.5px;top:57.6px;width:1.0px;height:1.0px;background:#6e6e6e;"></div>
<div style="left:20.0px;top:57.6px;width:1.0px;height:1.0px;background:#6e6e6e;"></div>
<div style="left:22.5px;top:57.6px;width:1.0px;height:1.0px;background:#6e6e6e;"></div>
<div style="left:25.0px;top:57.6px;width:1.0px;height:1.0px;background:#6e6e6e;"></div>
<div style="left:27.5px;top:57.6px;width:1.0px;height:1.0px;background:#6e6e6e;"></div>
<div style="left:3px;top:96.8px;width:36.5px;height:0.8px;background:#404040;"></div>
<div style="left:3px;top:133.6px;width:36.5px;height:0.8px;background:#353535;"></div>
<div style="left:3px;top:205.4px;width:36.5px;height:0.8px;background:#353535;"></div>
<div style="left:3px;top:260.0px;width:36.5px;height:0.8px;background:#3e3e3e;"></div>
<div style="left:3px;top:280.20000000000005px;width:36.5px;height:0.8px;background:#363636;"></div>
<svg style="left:16.6px;top:112.6px;" width="2.4" height="2.4" viewBox="0 0 2.4 2.4"><path d="M2.4 0 V2.4 H0Z" fill="#080808"/></svg>
<svg style="left:36.8px;top:112.6px;" width="2.4" height="2.4" viewBox="0 0 2.4 2.4"><path d="M2.4 0 V2.4 H0Z" fill="#080808"/></svg>
<svg style="left:36.8px;top:130.4px;" width="2.4" height="2.4" viewBox="0 0 2.4 2.4"><path d="M2.4 0 V2.4 H0Z" fill="#080808"/></svg>
<svg style="left:16.6px;top:149.2px;" width="2.4" height="2.4" viewBox="0 0 2.4 2.4"><path d="M2.4 0 V2.4 H0Z" fill="#080808"/></svg>
<svg style="left:36.8px;top:184.4px;" width="2.4" height="2.4" viewBox="0 0 2.4 2.4"><path d="M2.4 0 V2.4 H0Z" fill="#080808"/></svg>
<svg style="left:16.6px;top:202px;" width="2.4" height="2.4" viewBox="0 0 2.4 2.4"><path d="M2.4 0 V2.4 H0Z" fill="#080808"/></svg>
<svg style="left:36.8px;top:202px;" width="2.4" height="2.4" viewBox="0 0 2.4 2.4"><path d="M2.4 0 V2.4 H0Z" fill="#080808"/></svg>
<svg style="left:16.6px;top:221.4px;" width="2.4" height="2.4" viewBox="0 0 2.4 2.4"><path d="M2.4 0 V2.4 H0Z" fill="#080808"/></svg>
<svg style="left:36.8px;top:221.4px;" width="2.4" height="2.4" viewBox="0 0 2.4 2.4"><path d="M2.4 0 V2.4 H0Z" fill="#080808"/></svg>
<svg style="left:16.6px;top:256.2px;" width="2.4" height="2.4" viewBox="0 0 2.4 2.4"><path d="M2.4 0 V2.4 H0Z" fill="#080808"/></svg>
<svg style="left:36.8px;top:256.2px;" width="2.4" height="2.4" viewBox="0 0 2.4 2.4"><path d="M2.4 0 V2.4 H0Z" fill="#080808"/></svg>
<svg style="left:16.6px;top:276px;" width="2.4" height="2.4" viewBox="0 0 2.4 2.4"><path d="M2.4 0 V2.4 H0Z" fill="#080808"/></svg>
<svg style="left:4px;top:64px;filter:blur(.25px);" width="14.4" height="13.4" viewBox="0 0 14.4 13.4"><path d="M0.8 0.6 L0.8 8.4 L3 6.4 L6.6 6.2 Z" fill="#cfcfcf" stroke="#e8e8e8" stroke-width="0.3"/>
<path d="M9.4 5.4 L11 7.2 H10 V8.6 H11.6 V7.6 L13.6 9.2 L11.6 10.8 V9.8 H10 V11.4 H11 L9.4 13.2 L7.8 11.4 H8.8 V9.8 H7.2 V10.8 L5.2 9.2 L7.2 7.6 V8.6 H8.8 V7.2 H7.8Z" fill="#c4c4c4"/></svg>
<svg style="left:24px;top:64.4px;filter:blur(.25px);" width="13.4" height="13.0" viewBox="0 0 13.4 13.0"><path d="M7.2 7.4 L12.4 12" stroke="#8a8a8a" stroke-width="2.2" stroke-linecap="round"/><path d="M7.4 7.2 L12 11.4" stroke="#e4e4e4" stroke-width="1" stroke-linecap="round"/>
<circle cx="4.8" cy="4.8" r="3.7" fill="#9ccaf0" stroke="#3f86d0" stroke-width="1.3"/><circle cx="4" cy="4" r="1.7" fill="#cfe6fa"/></svg>
<svg style="left:4.3px;top:82.2px;filter:blur(.25px);" width="12.2" height="12.0" viewBox="0 0 12.2 12.0"><path d="M3.2 6.6 L2.6 2.6 Q2.6 1.6 3.4 1.6 Q4.1 1.6 4.3 2.6 L4.8 5 L4.9 1.2 Q5 0.3 5.8 0.3 Q6.6 0.3 6.7 1.2 L6.8 5 L7.8 1.8 Q8.1 0.9 8.9 1.1 Q9.6 1.4 9.4 2.4 L8.8 5.6 L10.4 3.6 Q11 3 11.6 3.5 Q12 4 11.6 4.8 L10 8 Q9.6 11.6 7 11.6 H5 Q3.4 11.6 2.4 9.8 L0.4 6.8 Q0 6 0.7 5.7 Q1.5 5.4 2.2 6.2 Z" fill="#f2f2f2"/></svg>
<svg style="left:23.4px;top:81.8px;filter:blur(.25px);" width="14.2" height="13.2" viewBox="0 0 14.2 13.2"><path d="M7.4 4.6 L9.8 7 L3.2 12.6 L0.5 13.1 L1.1 10.6 Z" fill="#e6e6e6" stroke="#8c8c8c" stroke-width="0.6"/>
<path d="M6.2 3.6 L10.6 8 L11.9 6.7 L10.9 5.7 L13.5 3.1 Q14.6 1.5 13.3 0.4 Q12 -0.7 10.6 0.5 L8.2 2.9 L7.4 2.3 Z" fill="#c41848" stroke="#8a0c30" stroke-width="0.4"/><path d="M10.4 1.8 L12.2 0.6" stroke="#f08aa8" stroke-width="0.9"/></svg>
<svg style="left:3.3px;top:101.8px;filter:blur(.25px);" width="14.2" height="10.6" viewBox="0 0 14.2 10.6"><rect x="0.7" y="0.7" width="12.8" height="9.2" fill="#5c5c5c" stroke="#ececec" stroke-width="1.1" stroke-dasharray="2.2 1.6"/></svg>
<svg style="left:24.2px;top:100.8px;filter:blur(.25px);" width="13.6" height="13.4" viewBox="0 0 13.6 13.4"><path d="M0.6 4.4 L4.6 6 L3 8.2 L8.4 7.4 L5.4 10 L10.6 10.6 L6.2 13 L2.4 11.2 L4 9.4 L1.6 8 L2.8 6.2Z" fill="none" stroke="#cfae3e" stroke-width="1" stroke-linejoin="round"/>
<path d="M7.6 2.4 Q9 0.4 11 1 Q13.2 1.8 12.4 4 Q11.8 5.6 9.8 7" fill="none" stroke="#d02850" stroke-width="2.1" stroke-linecap="butt"/><path d="M9.4 1.6 Q10.6 1.2 11.4 2" fill="none" stroke="#f0a0b4" stroke-width="0.6"/></svg>
<svg style="left:4px;top:118px;filter:blur(.25px);" width="14" height="13.6" viewBox="0 0 14 13.6"><path d="M6 6 L12.6 12.4" stroke="#7a7a7a" stroke-width="2" stroke-linecap="round"/><path d="M6.4 6.2 L12.4 12" stroke="#d8d8d8" stroke-width="0.8" stroke-linecap="round"/>
<path d="M5 0.4 L5.8 3.4 L8.6 1.8 L7 4.4 L9.8 5.2 L7 6 L8.4 8.6 L5.8 7 L5 9.8 L4.2 7 L1.4 8.6 L3 6 L0.2 5.2 L3 4.4 L1.4 1.8 L4.2 3.4Z" fill="#dff2ff"/><circle cx="5" cy="5.2" r="3.6" fill="#3a9ae0" opacity=".3"/><circle cx="5" cy="5.2" r="2.1" fill="#fff"/></svg>
<svg style="left:22.4px;top:117.4px;filter:blur(.25px);" width="16.4" height="15.0" viewBox="0 0 16.4 15.0"><path d="M6.6 6 L15 13.6" stroke="#2a2a2a" stroke-width="2.4" stroke-linecap="round"/><path d="M6.4 5.6 L14 12.6" stroke="#b4b4b4" stroke-width="1.3" stroke-linecap="round"/><path d="M5.6 4.6 L8.2 7" stroke="#3a5ab0" stroke-width="1.8"/>
<rect x="0.8" y="1.2" width="5" height="7.6" rx="2.4" fill="none" stroke="#e4e4e4" stroke-width="1" stroke-dasharray="1.6 1.1"/></svg>
<span id="t61" class="t" style="left:5.1px;top:136px;font-size:14.6px;line-height:17.52px;color:#bcbcbc;font-weight:bold;font-family:'Liberation Serif',serif;transform:translateY(0.43px) scaleX(1.0273);">T</span>
<div style="left:23px;top:137px;width:16px;height:14.8px;background:#2b2b2b;border-radius:1px;"></div>
<svg style="left:24.2px;top:137.8px;filter:blur(.25px);" width="13.0" height="12.0" viewBox="0 0 13.0 12.0"><path d="M3.2 0.4 V8.8 H12" fill="none" stroke="#d0d0d0" stroke-width="1.7"/><path d="M0.4 3.2 H9.2 V11.6" fill="none" stroke="#d0d0d0" stroke-width="1.7"/><path d="M4.6 8 L8.4 4.2" stroke="#888" stroke-width="0.7"/></svg>
<svg style="left:4px;top:154.6px;filter:blur(.25px);" width="14" height="13.0" viewBox="0 0 14 13.0"><path d="M7 1.2 L8.7 4.8 L12.6 5.2 L9.7 7.9 L10.5 11.8 L7 9.8 L3.5 11.8 L4.3 7.9 L1.4 5.2 L5.3 4.8Z" fill="#8fbcc8" stroke="#a9d0da" stroke-width="2" stroke-linejoin="round"/><path d="M7 3.8 L9.8 8.2 L7 7.2 L4.2 8.2Z" fill="#16282e"/><path d="M3.2 10.4 Q7 8.6 10.8 10.4" stroke="#5f94a4" stroke-width="0.9" fill="none"/><path d="M2.2 5 L5.4 4.4 L7 1.4" stroke="#d4ecf2" stroke-width="0.7" fill="none"/></svg>
<svg style="left:24.6px;top:156.8px;filter:blur(.25px);" width="12.8" height="10.2" viewBox="0 0 12.8 10.2"><rect x="3.2" y="3.2" width="8.8" height="6.2" fill="#35527a" fill-opacity=".7" stroke="#9ab8d8" stroke-width="0.6" transform="rotate(5 8 6)"/><rect x="0.5" y="0.5" width="9" height="6.4" fill="#3b82e0" stroke="#c4dcf4" stroke-width="0.7"/></svg>
<svg style="left:3.6px;top:172.6px;filter:blur(.25px);" width="14.4" height="12.0" viewBox="0 0 14.4 12.0"><path d="M2.8 0 V5.6 M0 2.8 H5.6" stroke="#b8b8b8" stroke-width="0.7"/><path d="M3 8.6 Q8.2 3.6 13.6 8.6 Q8.2 12.8 3 8.6Z" fill="#f4f4f4" stroke="#1c1c1c" stroke-width="0.6"/><circle cx="8.2" cy="8.4" r="2.7" fill="#a00808"/><circle cx="8.2" cy="8.4" r="1.1" fill="#300"/></svg>
<svg style="left:23.8px;top:172px;filter:blur(.25px);" width="14.6" height="14" viewBox="0 0 14.6 14"><g transform="rotate(-43 7.3 7)"><rect x="-1.2" y="4.4" width="17" height="5.4" rx="2.4" fill="#e8c020" stroke="#a88408" stroke-width="0.5"/><rect x="-0.6" y="4.9" width="15.8" height="1.6" rx="0.8" fill="#fbe27a"/><rect x="5" y="4.6" width="4.6" height="5" fill="#d4a810"/></g></svg>
<svg style="left:5.4px;top:190.8px;filter:blur(.25px);" width="11.4" height="14.0" viewBox="0 0 11.4 14.0"><circle cx="5.4" cy="2.2" r="1.8" fill="#d85a10"/><rect x="4.4" y="3.4" width="2" height="3.4" fill="#c84c08"/><path d="M1.6 6.4 H9.4 L10.8 8 V11 H0.2 V8 Z" fill="#f0b418"/><path d="M4 8.8 L5.4 10.4 L6.8 8.8Z" fill="#222"/><rect x="0.2" y="11.6" width="10.8" height="1.9" fill="#1a66b8"/></svg>
<svg style="left:24.2px;top:191.4px;filter:blur(.25px);" width="13.6" height="10.8" viewBox="0 0 13.6 10.8"><path d="M4.4 1.8 L13 0.4 L8.8 5.6 L0.4 7Z" fill="#f07aa0"/><path d="M0.4 7 L8.8 5.6 L8.8 8.8 L0.6 9.8Z" fill="#d85084"/><path d="M8.8 5.6 L13 0.4 L13 3.2 L8.8 8.8Z" fill="#c84070"/><path d="M4.8 2.2 L12 1" stroke="#f8b4cc" stroke-width="0.6"/></svg>
<svg style="left:4px;top:209.4px;filter:blur(.25px);" width="14.6" height="13.6" viewBox="0 0 14.6 13.6"><path d="M12.6 0.4 Q14.8 0.8 14.2 3 L9.4 9.2 L6.6 6.8 Z" fill="#9a9a9a" stroke="#c4c4c4" stroke-width="0.5"/><path d="M6.6 6.8 L9.4 9.2 L7 11.4 L4.6 9.2Z" fill="#141414"/><path d="M4.6 9.2 L7 11.4 Q4.6 13.4 0.4 12.8 Q3.6 11.6 4.6 9.2Z" fill="#3aa4dc"/></svg>
<svg style="left:23.2px;top:208.6px;filter:blur(.25px);" width="15.6" height="14.4" viewBox="0 0 15.6 14.4"><g fill="#c8c8c8"><circle cx="4.8" cy="4.8" r="3"/><g stroke="#c8c8c8" stroke-width="1.5"><path d="M4.8 0.6 V9 M0.6 4.8 H9 M1.8 1.8 L7.8 7.8 M7.8 1.8 L1.8 7.8"/></g></g><circle cx="4.8" cy="4.8" r="1.4" fill="#464646"/>
<path d="M14 4.4 Q15.8 5.4 14.8 7.4 L11.8 10.6 L9.6 8.4Z" fill="#a8a8a8" stroke="#c4c4c4" stroke-width="0.4"/><path d="M9.6 8.4 L11.8 10.6 L10 12.4 L8 10.4Z" fill="#101010"/><path d="M8 10.4 L10 12.4 Q8.6 14 6.2 13.8 Q7.8 12.6 8 10.4Z" fill="#2a5aa8"/></svg>
<svg style="left:5.2px;top:227.2px;filter:blur(.25px);" width="12.6" height="12.6" viewBox="0 0 12.6 12.6"><path d="M4.8 4 Q3.8 0.6 5.4 0.5 Q6.8 0.6 6.4 4.6" fill="none" stroke="#e4e4e4" stroke-width="1"/><path d="M1 6.8 L6.4 3 L10 8 L4.8 12Z" fill="#cfcfcf" stroke="#7a7a7a" stroke-width="0.5"/><path d="M1 6.8 L6.4 3 L7.4 4.4 L2 8.2Z" fill="#f6f6f6"/><path d="M3.6 10 L8.6 6.4 L10 8 L4.8 12Z" fill="#8a8a8a"/><path d="M8.6 4.6 Q12.8 5.2 11.8 11.4 Q10.4 8 9.6 7.2Z" fill="#2a7ec0"/><path d="M6.2 12.2 Q9.6 12.6 11.6 10" stroke="#2a7ec0" stroke-width="1.3" fill="none"/></svg>
<div style="left:24px;top:228.6px;width:14px;height:9.4px;background:linear-gradient(90deg,#f6e02a,#e8dc30 28%,#5ab890 60%,#1a86c4);border:0.6px solid #2a2a2a;box-shadow:0 0.6px 0.8px #222;"></div>
<svg style="left:4px;top:245.6px;filter:blur(.25px);" width="12.8" height="10.4" viewBox="0 0 12.8 10.4"><path d="M6.3 10 Q0.2 5.6 0.4 3 Q0.6 0.4 3.2 0.4 Q5.2 0.4 6.3 2.4 Q7.4 0.4 9.4 0.4 Q12 0.4 12.2 3 Q12.4 5.6 6.3 10Z" fill="#2b9fd4"/><path d="M2 2.6 Q2.6 1.4 3.8 1.4" stroke="#6cc4ec" stroke-width="0.7" fill="none"/></svg>
<svg style="left:26.4px;top:244.8px;filter:blur(.25px);" width="8.2" height="11.8" viewBox="0 0 8.2 11.8"><path d="M4 0.4 Q7.6 5.4 7.6 7.8 Q7.6 11.2 4 11.2 Q0.4 11.2 0.4 7.8 Q0.4 5.4 4 0.4Z" fill="#5aa8e0" stroke="#9cccf0" stroke-width="0.5"/><path d="M2 7.6 Q2 9.6 3.8 10" stroke="#c8e4f8" stroke-width="0.8" fill="none"/></svg>
<svg style="left:4.2px;top:264.8px;filter:blur(.25px);" width="13.0" height="10.0" viewBox="0 0 13.0 10.0"><path d="M1.6 1.6 Q3.4 -0.2 6 0.6 Q8.6 0 11 1 Q13 2 12.4 4.6 Q13 7.4 11 8.6 Q8.4 9.8 6 9 Q3.4 9.8 1.6 8.4 Q-0.2 6.4 0.6 4.4 Q0.2 2.8 1.6 1.6Z" fill="#e8e8e8"/><ellipse cx="4.4" cy="5.4" rx="1.9" ry="1.5" fill="#2a2a2a"/><path d="M7.6 3 Q10 2.4 11 4" stroke="#bcbcbc" stroke-width="0.8" fill="none"/></svg>
<div style="left:10.2px;top:289px;width:27.8px;height:28px;background:#6f7e79;border:0.6px solid #5a6662;"></div>
<div style="left:3.8px;top:283px;width:27.4px;height:26.8px;background:#fff;border:0.6px solid #c8c8c8;box-shadow:0.4px 0.4px 0.6px #333;"></div>
<svg style="left:33px;top:282.8px;" width="5.4" height="5.6" viewBox="0 0 5.4 5.6"><path d="M1 2.6 Q1 0.8 3 0.8 M3.8 4.6 Q4.6 4.6 4.6 2.8" fill="none" stroke="#e8e8e8" stroke-width="0.8"/><path d="M2.6 -0.2 L4.2 0.8 L2.6 1.8Z M3.6 2.8 H5.6 L4.6 1.6Z" fill="#e8e8e8"/><path d="M0 2.2 H2 L1 3.6Z M2.2 3.8 L3.8 4.8 L2.2 5.6Z" fill="#e8e8e8"/></svg>
<svg style="left:3.4px;top:311.4px;" width="5.8" height="5.8" viewBox="0 0 5.8 5.8"><rect x="2" y="2" width="3.6" height="3.6" fill="#fff" stroke="#111" stroke-width="0.5"/><rect x="0.3" y="0.3" width="3.6" height="3.6" fill="#000" stroke="#ddd" stroke-width="0.5"/></svg>
<svg style="left:468.1px;top:269.6px;" width="2.2" height="4.4" viewBox="0 0 2.2 4.4"><path d="M0.2 0.4 L2 2.2 L0.2 4Z" fill="#d0d0d0"/></svg>
</div></body></html>
